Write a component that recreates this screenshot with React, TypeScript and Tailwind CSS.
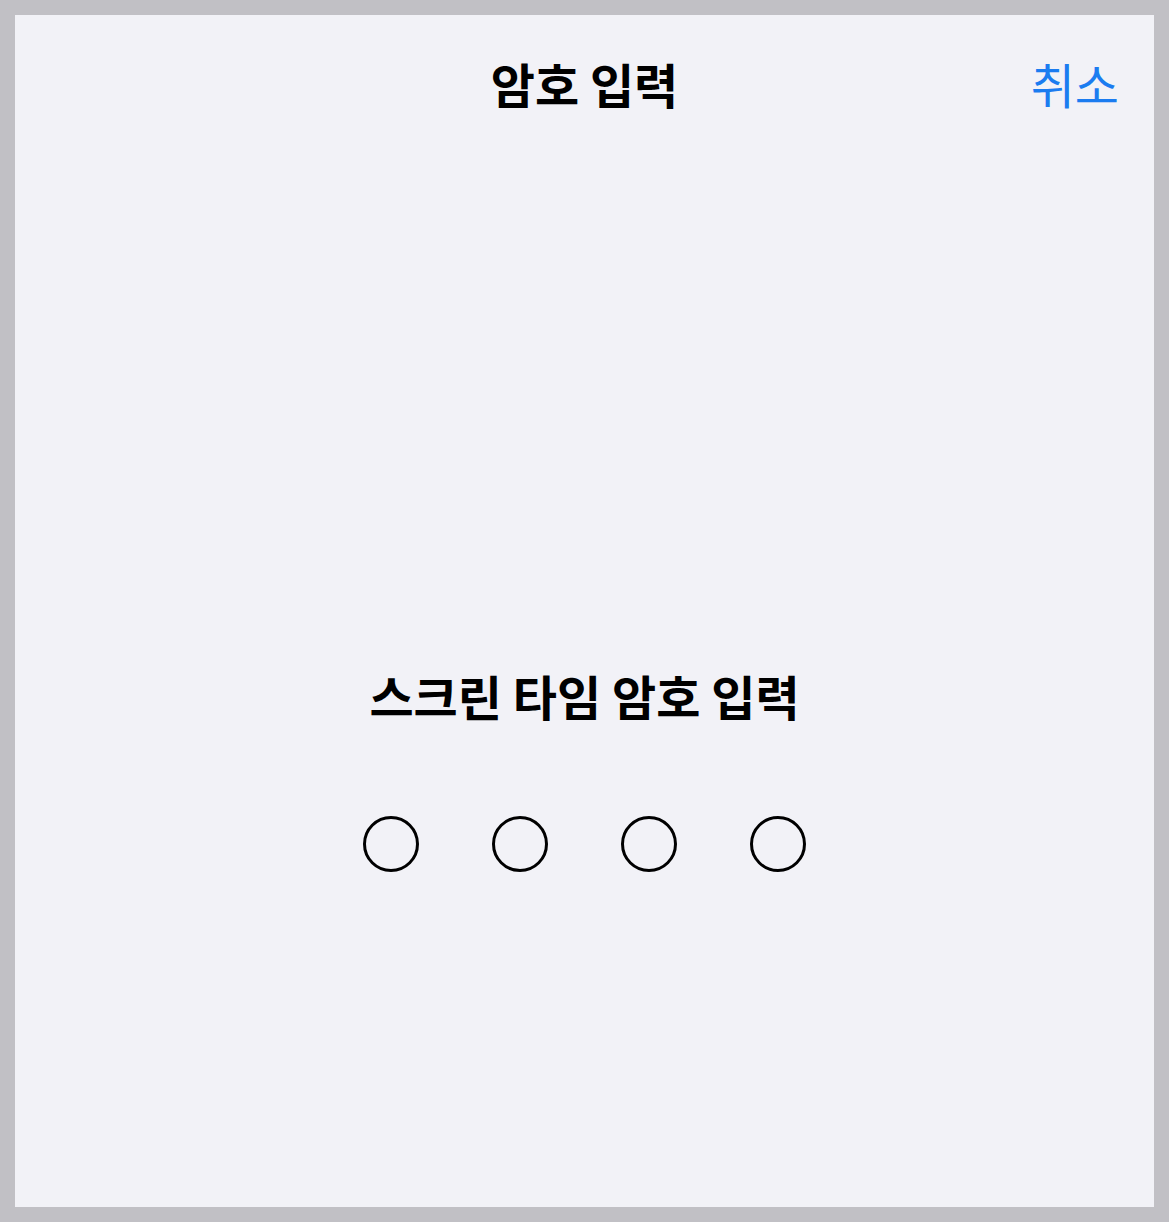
const dots = [0, 1, 2, 3];

const App = () => {
  return (
    <div className="w-[1169px] h-[1222px] bg-[#c1c0c5] p-[15px]">
      <div
        className="flex h-full flex-col bg-[#f2f2f7]"
        style={{ fontFamily: '"Noto Sans CJK KR", "Noto Sans", sans-serif' }}
      >
        {/* header */}
        <div className="relative flex h-[136px] items-center justify-center">
          <h1 className="text-[48px] font-bold leading-none text-black">암호 입력</h1>
          <button className="absolute right-[35px] top-1/2 -translate-y-1/2 text-[48px] leading-none text-[#1b7cf0]">
            취소
          </button>
        </div>

        {/* passcode */}
        <div className="flex flex-col items-center pt-[520px]">
          <h2 className="text-[48px] font-bold leading-none text-black">스크린 타임 암호 입력</h2>
          <div className="mt-[97px] flex gap-[73px]">
            {dots.map((i) => (
              <div key={i} className="h-[56px] w-[56px] rounded-full border-[3px] border-black" />
            ))}
          </div>
        </div>
      </div>
    </div>
  );
};

export default App;
